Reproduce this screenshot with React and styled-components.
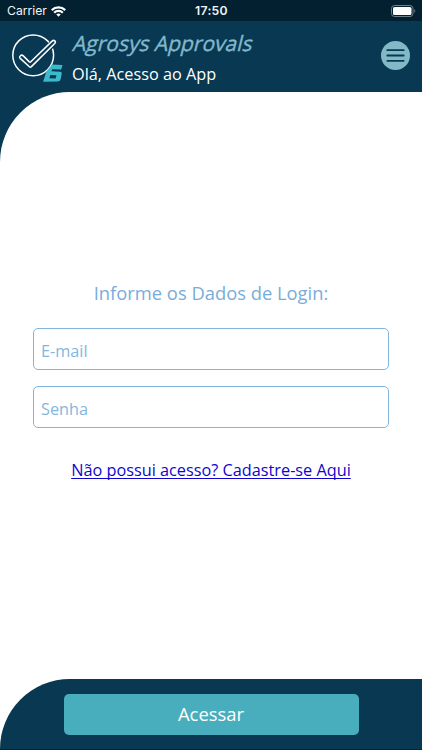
import React from "react";
import styled, { createGlobalStyle } from "styled-components";

const GlobalStyle = createGlobalStyle`
  *, *::before, *::after { box-sizing: border-box; }
  body { margin: 0; background: #fff; }
  svg { display: block; }
`;

const Screen = styled.div`
  display: flex;
  flex-direction: column;
  width: 422px;
  height: 750px;
  overflow: hidden;
  background: #fff;
  font-family: "Open Sans", "Noto Sans", sans-serif;
  white-space: nowrap;
`;

const StatusBar = styled.div`
  flex: none;
  display: grid;
  grid-template-columns: 1fr auto 1fr;
  align-items: center;
  height: 21px;
  padding: 1px 6px 0 7px;
  background: #02202f;
  color: #f2f5f7;
  font-family: Inter, sans-serif;
  font-size: 12.2px;
  line-height: 20px;
`;

const Carrier = styled.div`
  display: flex;
  align-items: center;
  gap: 4px;
`;

const Clock = styled.div`
  font-weight: 600;
  letter-spacing: 0.3px;
`;

const Battery = styled.div`
  justify-self: end;
`;

const Header = styled.header`
  flex: none;
  display: flex;
  align-items: flex-start;
  height: 71px;
  padding: 12px 12px 0 11px;
  background: #083852;
`;

const Titles = styled.div`
  flex: 1;
  padding-left: 9px;
`;

const Title = styled.h1`
  width: max-content;
  margin: -5px 0 0;
  color: #82b9cb;
  font-size: 21px;
  font-weight: 500;
  line-height: 30px;
  -webkit-text-stroke: 0.35px #82b9cb;
  transform: skewX(-14deg);
  transform-origin: 0 22px;
`;

const Greeting = styled.p`
  margin: 4px 0 0;
  color: #fff;
  font-size: 16.28px;
  line-height: 24px;
`;

const MenuButton = styled.button`
  display: grid;
  place-items: center;
  width: 29px;
  height: 29px;
  margin-top: 8px;
  padding: 0;
  border: 0;
  border-radius: 50%;
  background: #82b9c7;
  color: #083852;
`;

const Backdrop = styled.div`
  flex: 1;
  display: flex;
  background: linear-gradient(#083852 50%, #fff 50%);
`;

const Content = styled.main`
  flex: 1;
  display: flex;
  flex-direction: column;
  align-items: center;
  padding: 186px 33px 0;
  border-top-left-radius: 70px;
  background: #fff;
`;

const Prompt = styled.h2`
  margin: 0;
  color: #78addb;
  font-size: 18.35px;
  font-weight: 400;
  line-height: 30px;
`;

const Fields = styled.form`
  display: flex;
  flex-direction: column;
  gap: 16px;
  width: 100%;
  margin-top: 20px;
`;

const Field = styled.input`
  width: 100%;
  height: 42px;
  padding: 3px 7px 0;
  border: 1px solid #82b5dd;
  border-radius: 5px;
  outline: 0;
  background: #fff;
  color: #78addb;
  font: 400 16.28px "Open Sans", "Noto Sans", sans-serif;
  &::placeholder { color: #84b7e0; opacity: 1; }
`;

const SignUpLink = styled.a`
  margin-top: 30px;
  color: #1005cf;
  font-size: 16.28px;
  line-height: 24px;
  text-decoration: underline;
  text-decoration-thickness: 1px;
  text-underline-offset: 2px;
  text-decoration-skip-ink: none;
`;

const Footer = styled.footer`
  flex: none;
  display: flex;
  justify-content: center;
  height: 71.5px;
  padding-top: 15px;
  border-bottom: 1px solid #032537;
  border-top-left-radius: 70px 70px;
  background: #083852;
`;

const SubmitButton = styled.button`
  width: 295px;
  height: 41px;
  padding: 0 0 1px;
  border: 0;
  border-radius: 5px;
  background: #48aebe;
  color: #fff;
  font: 400 18.4px "Open Sans", "Noto Sans", sans-serif;
`;

const WifiIcon = () => (
  <svg width="15" height="11" viewBox="0 0 15 11" fill="none" stroke="#fff" strokeWidth="2.2">
    <path d="M.8 4.1a9.5 9.5 0 0 1 13.4 0M3.2 6.7a6.1 6.1 0 0 1 8.6 0" />
    <path d="m7.5 10.8-2.2-2.2a3.2 3.2 0 0 1 4.4 0z" fill="#fff" stroke="none" />
  </svg>
);

const BatteryIcon = () => (
  <svg width="25" height="12" viewBox="0 0 25 12">
    <rect x=".5" y=".5" width="21.5" height="11" rx="3" fill="none" stroke="#718089" />
    <rect x="2" y="2" width="18.5" height="8" rx="1.6" fill="#fff" />
    <path d="M23.3 4q2 2 0 4z" fill="#718089" />
  </svg>
);

const BrandMark = () => (
  <svg width="52" height="50" viewBox="0 0 52 50" fill="none">
    <circle cx="22.2" cy="22.3" r="20.4" stroke="#fff" strokeWidth="1.5" />
    <path d="m10.5 24.3 8.8 8.3L42.7 9.5" stroke="#083852" strokeWidth="7" strokeLinecap="round" />
    <path
      d="M9.4 22.8c-1 .9-1 1.8-.2 2.6l9.2 8.4c.7.6 1.3.5 2-.2l23.3-23.1c1.8-2-.7-4.2-2.6-2.4L19.8 28.8c-.5.5-1 .5-1.5.1l-6-6c-1-1-2-1-2.9-.1z"
      stroke="#fff"
      strokeWidth="1.5"
    />
    <path
      fillRule="evenodd"
      d="M41 31.5l10.5.5-1.3 4.6-9-.3-.8 1.9 8.8.6q2 .2 1.5 2l-1 5.2q-.5 2.6-3 2.6l-14.6.2 2.4-7.6q.8-2.8 2.5-4.6zM39.3 42l-.9 3.2 6.2.2.9-3.2z"
      fill="#3bb9cd"
    />
  </svg>
);

const MenuIcon = () => (
  <svg width="19" height="15" viewBox="0 0 19 15" stroke="currentColor" strokeWidth="1.8" strokeLinecap="round">
    <path d="M1.3 2.2h16.4M1.3 7.5h16.4M1.3 12.8h16.4" />
  </svg>
);

export default function App() {
  return (
    <Screen>
      <GlobalStyle />
      <StatusBar>
        <Carrier>Carrier <WifiIcon /></Carrier>
        <Clock>17:50</Clock>
        <Battery><BatteryIcon /></Battery>
      </StatusBar>
      <Header>
        <BrandMark />
        <Titles>
          <Title>Agrosys Approvals</Title>
          <Greeting>Olá, Acesso ao App</Greeting>
        </Titles>
        <MenuButton aria-label="Menu"><MenuIcon /></MenuButton>
      </Header>
      <Backdrop>
        <Content>
          <Prompt>Informe os Dados de Login:</Prompt>
          <Fields>
            <Field type="email" placeholder="E-mail" />
            <Field type="password" placeholder="Senha" />
          </Fields>
          <SignUpLink href="#">Não possui acesso? Cadastre-se Aqui</SignUpLink>
        </Content>
      </Backdrop>
      <Footer>
        <SubmitButton type="button">Acessar</SubmitButton>
      </Footer>
    </Screen>
  );
}
